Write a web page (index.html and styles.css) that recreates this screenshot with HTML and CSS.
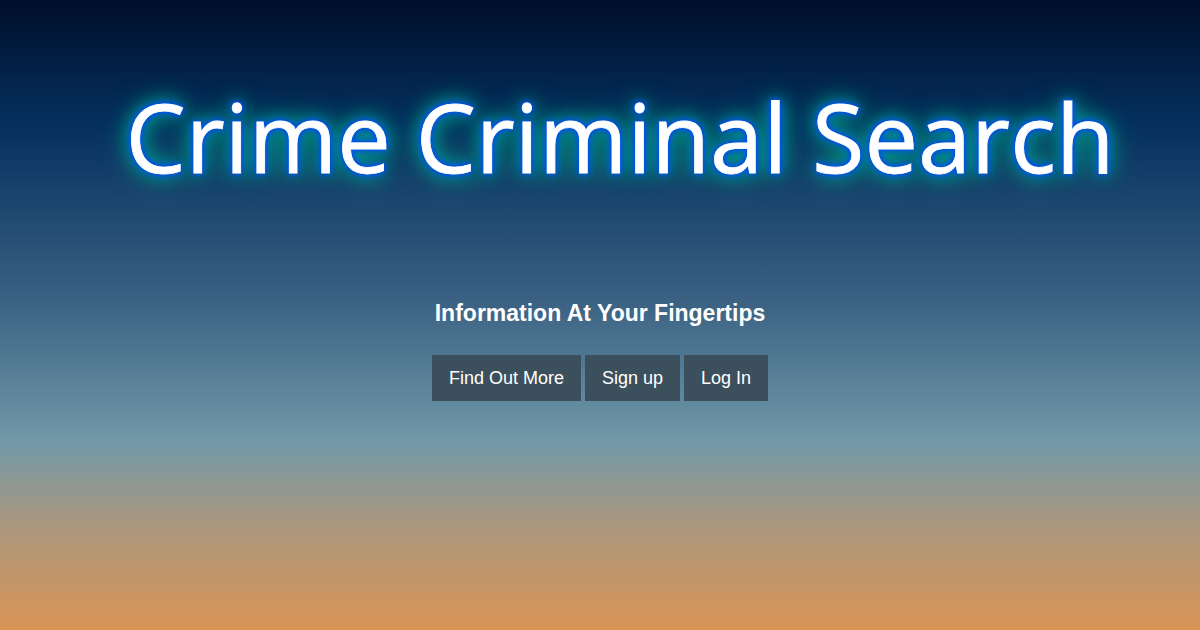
FILE: index.html
```html
<!DOCTYPE html>
<html>
<head>
<meta charset="utf-8">
<link rel="stylesheet" href="styles.css">
</head>
<body>
<main class="hero">
  <h1 class="title">Crime Criminal Search</h1>
  <p class="tagline">Information At Your Fingertips</p>
  <div class="actions">
    <a class="btn">Find Out More</a>
    <a class="btn">Sign up</a>
    <a class="btn">Log In</a>
  </div>
</main>
</body>
</html>
```

FILE: styles.css
```css
html, body {
  margin: 0;
  height: 100%;
}
body {
  background: linear-gradient(to bottom, #000f2a 0%, #05305f 20%, #3b6283 48%, #7199a8 70%, #a9977e 83%, #da9456 100%);
  font-family: "Liberation Sans", Arial, sans-serif;
  color: #fff;
}
.hero {
  display: flex;
  flex-direction: column;
  align-items: center;
  padding-top: 76px;
}
.title {
  margin: 0;
  font-family: "Open Sans", "DejaVu Sans", sans-serif;
  font-weight: 400;
  font-size: 95.5px;
  line-height: 120px;
  padding-left: 40px;
  color: #fff;
  -webkit-text-stroke: 0.8px #fff;
  text-shadow: 0 0 2px #0055ff, 0 0 4px #0050f0, 0 0 7px #0050f0, 0 0 10px #0048e0, 0 0 16px #00b090, 0 0 22px #00a888, 0 0 30px #009a80;
}
.tagline {
  margin: 105px 0 0;
  font-size: 23px;
  font-weight: 700;
  line-height: 24px;
}
.actions {
  display: flex;
  gap: 4px;
  margin-top: 30px;
}
.btn {
  display: block;
  background: #3c4f5c;
  color: #fff;
  font-size: 18px;
  line-height: 46px;
  padding: 0 17px;
}
```
